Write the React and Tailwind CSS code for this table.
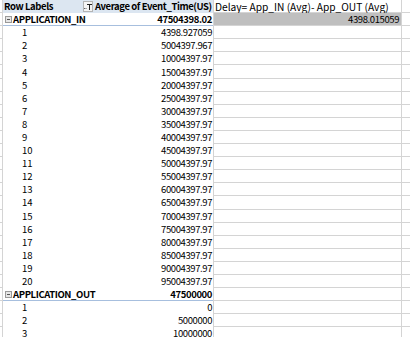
import React from "react";

const FONT = { fontFamily: "'Noto Sans CJK SC', Lato, sans-serif" };

const inRows = [
  ["1", "4398.927059"],
  ["2", "5004397.967"],
  ["3", "10004397.97"],
  ["4", "15004397.97"],
  ["5", "20004397.97"],
  ["6", "25004397.97"],
  ["7", "30004397.97"],
  ["8", "35004397.97"],
  ["9", "40004397.97"],
  ["10", "45004397.97"],
  ["11", "50004397.97"],
  ["12", "55004397.97"],
  ["13", "60004397.97"],
  ["14", "65004397.97"],
  ["15", "70004397.97"],
  ["16", "75004397.97"],
  ["17", "80004397.97"],
  ["18", "85004397.97"],
  ["19", "90004397.97"],
  ["20", "95004397.97"],
];

const outRows = [
  ["1", "0"],
  ["2", "5000000"],
  ["3", "10000000"],
];

function Collapse() {
  return (
    <span className="inline-flex items-center justify-center w-[7px] h-[7px] border border-[#9a9a9a] bg-[#e6e6e6] mr-[1px] shrink-0">
      <span className="block w-[3px] h-px bg-[#555]" />
    </span>
  );
}

function FilterButton() {
  return (
    <span className="flex items-center justify-center w-[10px] h-[11px] border border-[#b4b4b4] bg-[#f4f4f4] mr-[1px]">
      <svg width="8" height="7" viewBox="0 0 8 7">
        <rect x="0" y="5" width="1" height="1" fill="#666" />
        <rect x="1.5" y="5" width="1" height="1" fill="#666" />
        <path d="M3 1h5v1H6v5H5V2H3z" fill="#222" />
      </svg>
    </span>
  );
}

// one spreadsheet line: left sliver, A, B, C, D
function Row({ a, b, bold, group, header, cGray, cText }) {
  const weight = bold ? "font-bold tracking-[-0.4px]" : "";
  return (
    <div className="flex h-[13.1px] leading-[13px] text-[9.5px] text-black">
      <div className="w-[3px] shrink-0 border-r border-b border-[#d4d4d4]" />
      <div
        className={`w-[91px] shrink-0 flex items-center whitespace-nowrap ${
          header ? "bg-[#dce6f1]" : ""
        } ${group ? "border-b border-[#a7bfde]" : ""} ${weight}`}
      >
        {a}
      </div>
      <div
        className={`w-[119px] shrink-0 flex items-center pr-[1px] whitespace-nowrap tracking-[-0.4px] ${
          header ? "bg-[#dce6f1] justify-start pl-[1px]" : "justify-end"
        } ${group ? "border-b border-[#a7bfde]" : ""} ${weight}`}
      >
        {b}
      </div>
      <div
        className={`w-[189px] shrink-0 flex items-center border-l border-r border-b border-[#d4d4d4] whitespace-nowrap ${
          cGray
            ? "bg-[#bfbfbf] justify-end pr-[2px] tracking-[-0.4px]"
            : "pl-[1px] text-[10.2px]"
        }`}
      >
        {cText}
      </div>
      <div className="flex-1 border-b border-[#d4d4d4]" />
    </div>
  );
}

export default function App() {
  return (
    <div className="w-[410px] h-[337px] overflow-hidden bg-white" style={FONT}>
      <Row
        header
        bold
        a={
          <div className="flex items-center justify-between w-full pl-[1px]">
            <span>Row Labels</span>
            <FilterButton />
          </div>
        }
        b={<span>Average of Event_Time(US)</span>}
        cText="Delay= App_IN (Avg)- App_OUT (Avg)"
      />
      <Row
        group
        bold
        a={
          <span className="flex items-center pl-[2px]">
            <Collapse />
            APPLICATION_IN
          </span>
        }
        b="47504398.02"
        cGray
        cText="4398.015059"
      />
      {inRows.map(([k, v]) => (
        <Row key={"in" + k} a={<span className="pl-[19px]">{k}</span>} b={v} />
      ))}
      <Row
        group
        bold
        a={
          <span className="flex items-center pl-[2px]">
            <Collapse />
            APPLICATION_OUT
          </span>
        }
        b="47500000"
      />
      {outRows.map(([k, v]) => (
        <Row key={"out" + k} a={<span className="pl-[19px]">{k}</span>} b={v} />
      ))}
    </div>
  );
}
